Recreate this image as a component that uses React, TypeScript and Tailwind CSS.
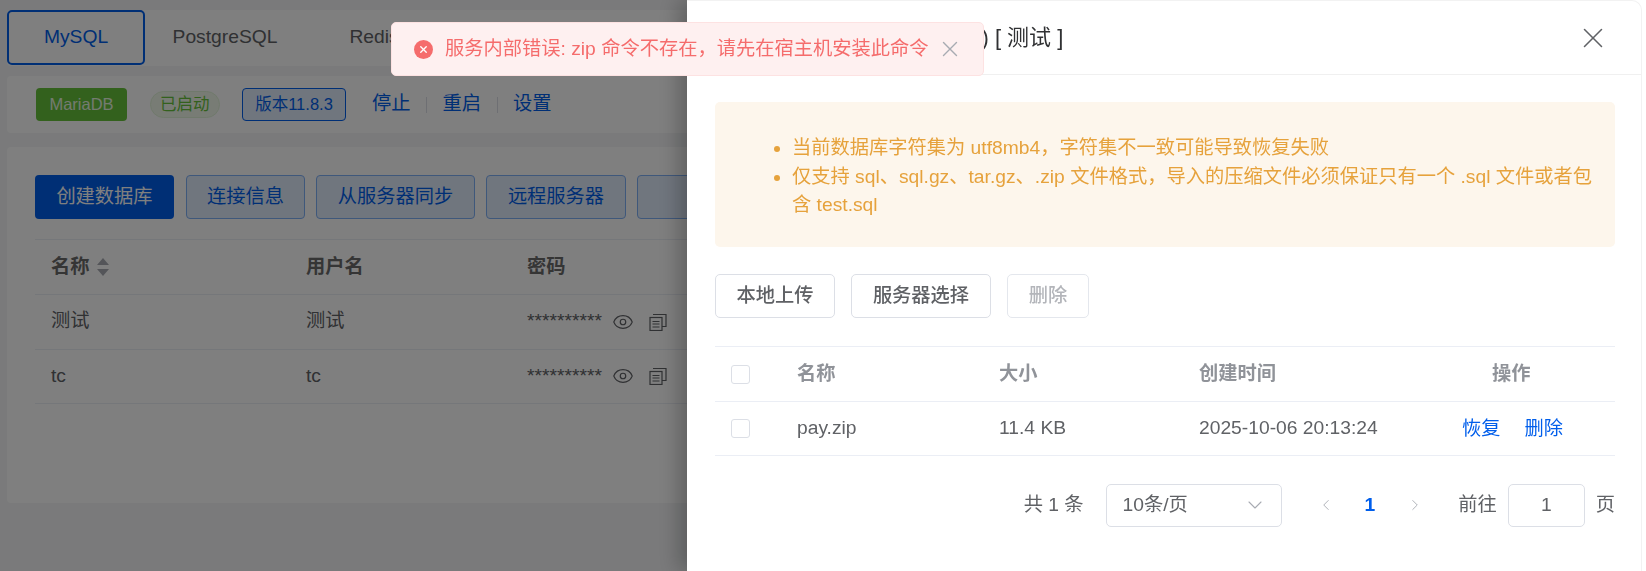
import { ChevronDown, ChevronLeft, ChevronRight, Eye, X } from "lucide-react";

const font = { fontFamily: '"Liberation Sans", "Noto Sans CJK SC", sans-serif' };

function CopyIcon() {
  return (
    <svg width="18" height="18" viewBox="0 0 18 18" fill="none" stroke="currentColor" strokeWidth="1.2">
      <rect x="1" y="4.5" width="12" height="13" />
      <path d="M4 1.5h13v12h-4M3.5 8.5h7M3.5 11h7M3.5 14h7" />
    </svg>
  );
}

function Row({ name }: { name: string }) {
  return (
    <div className="flex h-[54.5px] items-center border-b border-[#ebeef5] text-[19.25px] text-[#606266]">
      <div className="w-[271px] pl-[16px]">{name}</div>
      <div className="w-[221px]">{name}</div>
      <div className="flex items-center">
        <span>**********</span>
        <Eye className="ml-[10px] h-[22px] w-[22px] text-[#606266]" strokeWidth={1.3} />
        <span className="ml-[15px] text-[#606266]"><CopyIcon /></span>
      </div>
    </div>
  );
}

function Background() {
  return (
    <div className="h-[571px] bg-[#f4f5f7] px-[7px] pt-[10px]">
      <div className="flex h-[56px] items-start rounded-[4px] bg-white text-[19.25px] text-[#606266]">
        <div className="flex h-[55px] w-[138px] items-center justify-center rounded-[5px] border-2 border-[#005eeb] text-[#005eeb]">MySQL</div>
        <div className="flex h-[55px] w-[160px] items-center justify-center">PostgreSQL</div>
        <div className="flex h-[55px] w-[138px] items-center justify-center">Redis</div>
      </div>
      <div className="mt-[10px] flex h-[57px] items-center rounded-[4px] bg-white pl-[29px]">
        <span className="flex h-[33px] w-[91px] items-center justify-center rounded-[4px] bg-[#67c23a] text-[16.5px] text-[#e8f6e0]">MariaDB</span>
        <span className="ml-[22.5px] flex h-[27px] w-[70.5px] items-center justify-center rounded-full border border-[#e1f3d8] bg-[#f0f9eb] text-[16.5px] text-[#67c23a]">已启动</span>
        <span className="ml-[22px] flex h-[33px] w-[104px] items-center justify-center rounded-[4px] border border-[#005eeb] bg-[#e1ecfc] text-[16.5px] text-[#005eeb]">版本11.8.3</span>
        <span className="ml-[26px] text-[19.25px] text-[#005eeb]">停止</span>
        <span className="mx-[15.5px] h-[16px] w-px bg-[#dcdfe6]" />
        <span className="text-[19.25px] text-[#005eeb]">重启</span>
        <span className="mx-[15.5px] h-[16px] w-px bg-[#dcdfe6]" />
        <span className="text-[19.25px] text-[#005eeb]">设置</span>
      </div>
      <div className="mt-[14px] h-[356px] rounded-[4px] bg-white px-[28px] pt-[28px]">
        <div className="flex gap-[11px] text-[19.25px]">
          <span className="flex h-[44px] w-[139px] shrink-0 items-center justify-center rounded-[4px] bg-[#005eeb] text-white">创建数据库</span>
          <span className="ml-[1px] flex h-[44px] w-[119px] shrink-0 items-center justify-center rounded-[4px] border border-[#7fb0f6] bg-[#e1ecfc] text-[#005eeb]">连接信息</span>
          <span className="flex h-[44px] w-[159px] shrink-0 items-center justify-center rounded-[4px] border border-[#7fb0f6] bg-[#e1ecfc] text-[#005eeb]">从服务器同步</span>
          <span className="flex h-[44px] w-[140px] shrink-0 items-center justify-center rounded-[4px] border border-[#7fb0f6] bg-[#e1ecfc] text-[#005eeb]">远程服务器</span>
          <span className="flex h-[44px] w-[140px] shrink-0 items-center justify-center rounded-[4px] border border-[#7fb0f6] bg-[#e1ecfc] pl-[10px] text-[#005eeb]">管理</span>
        </div>
        <div className="mt-[20px] flex h-[56px] items-center border-y border-[#ebeef5] text-[19.25px] font-bold text-[#6b6b6b]">
          <div className="flex w-[271px] items-center gap-[7px] pl-[16px]">
            名称
            <span className="flex flex-col gap-[4px]">
              <span className="h-0 w-0 border-x-[6px] border-b-[7px] border-x-transparent border-b-[#a8abb2]" />
              <span className="h-0 w-0 border-x-[6px] border-t-[7px] border-x-transparent border-t-[#a8abb2]" />
            </span>
          </div>
          <div className="w-[221px]">用户名</div>
          <div>密码</div>
        </div>
        <Row name="测试" />
        <Row name="tc" />
      </div>
    </div>
  );
}

function Drawer() {
  return (
    <div className="fixed inset-y-0 right-0 w-[959px] bg-white shadow-[-8px_0_20px_rgba(0,0,0,0.25)]">
      <div className="mr-[4px] h-full rounded-tr-[10px] border-t border-r border-[#f2f2f2]">
        <div className="flex h-[74px] items-center justify-between border-b border-[#f0f0f0] pl-[28px] pr-[31px]">
          <span className="whitespace-nowrap text-[22px] text-[#303133]">数据库备份导入 - (MariaDB) [ 测试 ]</span>
          <X className="h-[34px] w-[34px] text-[#606266]" strokeWidth={1.1} />
        </div>
        <div className="pl-[28px] pr-[26px]">
          <div className="mt-[27px] rounded-[5px] bg-[#fdf6ec] pb-[27px] pl-[53px] pr-[20px] pt-[32px] text-[19.25px] leading-[28.5px] text-[#e6a23c]">
            <ul className="list-disc pl-[24px]">
              <li>当前数据库字符集为 utf8mb4，字符集不一致可能导致恢复失败</li>
              <li>仅支持 sql、sql.gz、tar.gz、.zip 文件格式，导入的压缩文件必须保证只有一个 .sql 文件或者包含 test.sql</li>
            </ul>
          </div>
          <div className="mt-[27px] flex gap-[16px] text-[19.25px]">
            <span className="flex h-[44px] w-[120px] items-center justify-center rounded-[5px] border border-[#dcdfe6] pt-[1px] font-medium text-[#5f6165]">本地上传</span>
            <span className="flex h-[44px] w-[140px] items-center justify-center rounded-[5px] border border-[#dcdfe6] pt-[1px] font-medium text-[#5f6165]">服务器选择</span>
            <span className="flex h-[44px] w-[82px] items-center justify-center rounded-[5px] border border-[#e4e7ed] pt-[1px] font-medium text-[#b3b5ba]">删除</span>
          </div>
          <div className="mt-[28px] flex h-[56px] items-center border-y border-[#ebeef5] pt-[1px] text-[19.25px] font-bold text-[#909399]">
            <span className="ml-[16px] h-[19px] w-[19px] rounded-[3px] border border-[#dcdfe6]" />
            <div className="ml-[47px] w-[202px]">名称</div>
            <div className="w-[200px]">大小</div>
            <div className="w-[293px]">创建时间</div>
            <div>操作</div>
          </div>
          <div className="flex h-[54px] items-center border-b border-[#ebeef5] text-[19.25px] text-[#606266]">
            <span className="ml-[16px] h-[19px] w-[19px] rounded-[3px] border border-[#dcdfe6]" />
            <div className="ml-[47px] w-[202px]">pay.zip</div>
            <div className="w-[200px]">11.4 KB</div>
            <div className="w-[263px]">2025-10-06 20:13:24</div>
            <span className="pt-[2px] text-[#005eeb]">恢复</span>
            <span className="ml-[24px] pt-[2px] text-[#005eeb]">删除</span>
          </div>
          <div className="mt-[28px] flex items-center justify-end text-[19.25px] text-[#606266]">
            <span>共 1 条</span>
            <div className="ml-[22px] flex h-[43px] w-[176px] items-center justify-between rounded-[5px] border border-[#dcdfe6] pl-[16px] pr-[14px]">
              <span>10条/页</span>
              <ChevronDown className="h-[24px] w-[24px] text-[#a8abb2]" strokeWidth={1.1} />
            </div>
            <ChevronLeft className="ml-[35px] h-[18px] w-[18px] text-[#a8abb2]" strokeWidth={1.2} />
            <span className="ml-[30px] font-bold text-[#005eeb]">1</span>
            <ChevronRight className="ml-[31px] h-[18px] w-[18px] text-[#a8abb2]" strokeWidth={1.2} />
            <span className="ml-[34px]">前往</span>
            <div className="ml-[11px] flex h-[43px] w-[77px] items-center justify-center rounded-[5px] border border-[#dcdfe6]">1</div>
            <span className="ml-[11px]">页</span>
          </div>
        </div>
      </div>
    </div>
  );
}

export default function App() {
  return (
    <div style={font} className="relative h-[571px] overflow-hidden">
      <Background />
      <div className="fixed inset-0 bg-black/50" />
      <Drawer />
      <div className="fixed left-[391px] top-[22px] flex h-[54px] w-[593px] items-center rounded-[5px] border border-[#fde2e2] bg-[#fef0f0] pl-[22px] text-[19.25px] text-[#f56c6c]">
        <span className="flex h-[19px] w-[19px] shrink-0 items-center justify-center rounded-full bg-[#f56c6c]">
          <X className="h-[11px] w-[11px] text-white" strokeWidth={3} />
        </span>
        <span className="ml-[12px] whitespace-nowrap">服务内部错误: zip 命令不存在，请先在宿主机安装此命令</span>
        <X className="ml-[9px] h-[26px] w-[26px] shrink-0 text-[#a8abb2]" strokeWidth={1.3} />
      </div>
    </div>
  );
}
